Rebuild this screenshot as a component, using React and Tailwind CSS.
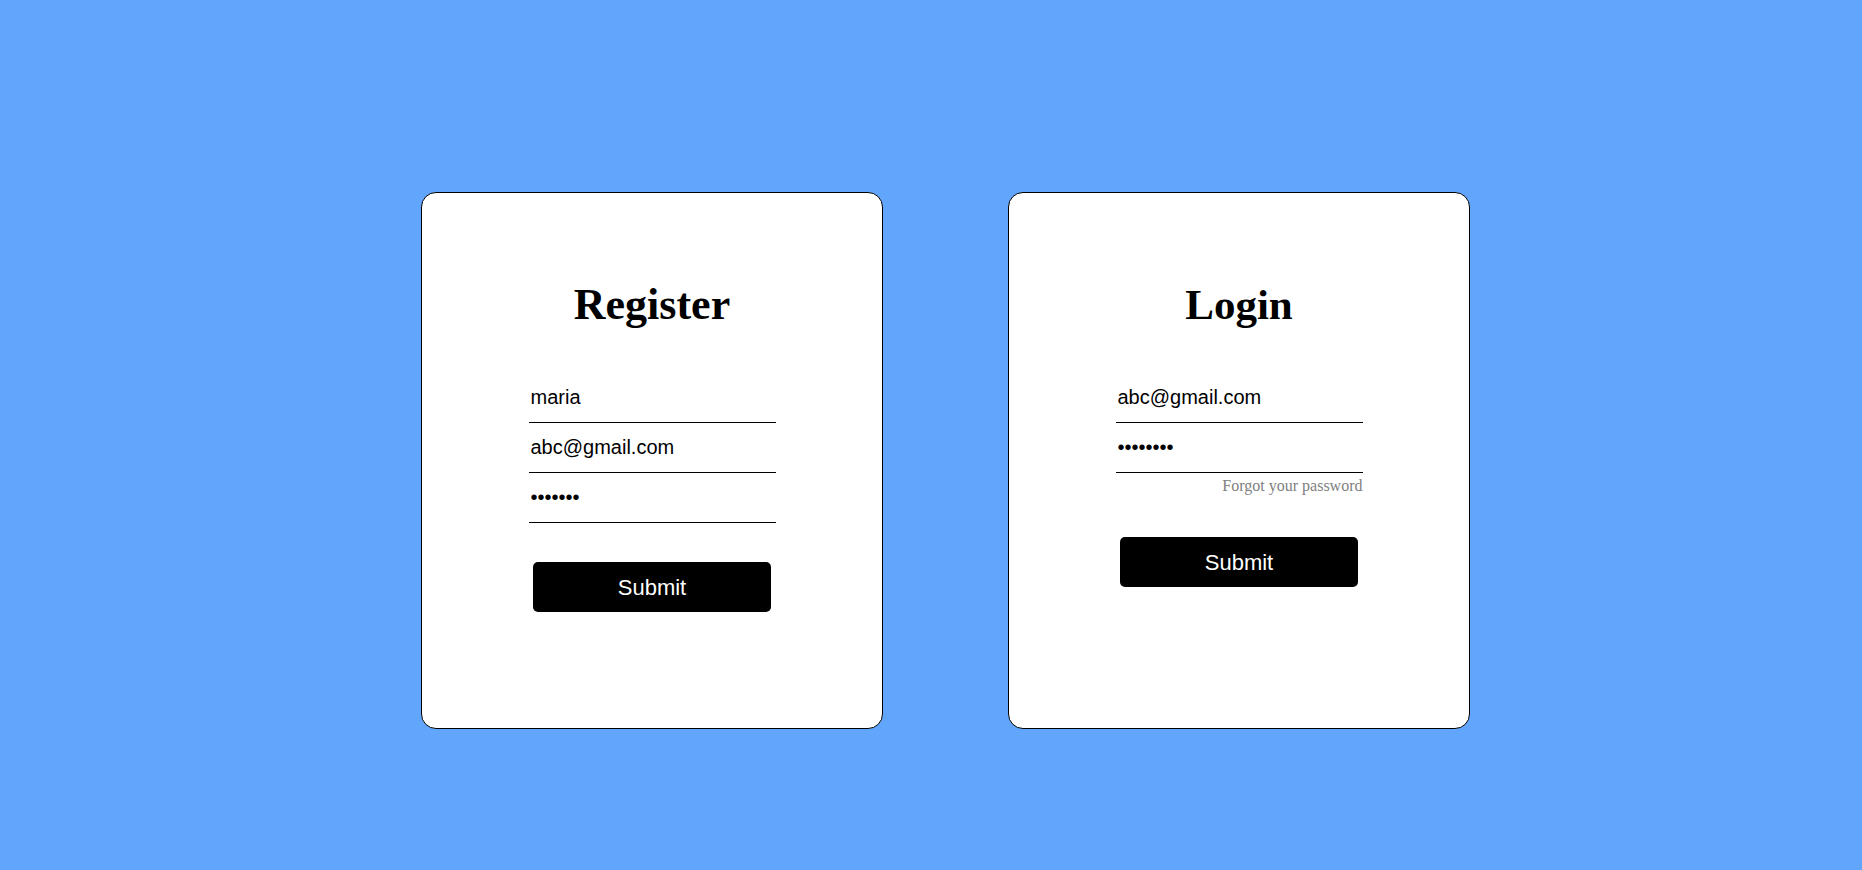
import { useState } from 'react';

function Field({ type = 'text', value, onChange }) {
  return (
    <input
      type={type}
      value={value}
      onChange={(e) => onChange(e.target.value)}
      className="block w-[247px] h-[50px] border-b border-black bg-transparent pl-[2px] text-[20px] text-black outline-none font-['Liberation_Sans',Arial,sans-serif]"
    />
  );
}

function SubmitButton({ className }) {
  return (
    <button
      type="button"
      className={`w-[238px] h-[50px] rounded-[5px] bg-black text-white text-[22px] font-['Liberation_Sans',Arial,sans-serif] ${className}`}
    >
      Submit
    </button>
  );
}

function App() {
  const [name, setName] = useState('maria');
  const [regEmail, setRegEmail] = useState('abc@gmail.com');
  const [regPass, setRegPass] = useState('1234567');
  const [loginEmail, setLoginEmail] = useState('abc@gmail.com');
  const [loginPass, setLoginPass] = useState('12345678');

  return (
    <div className="min-h-screen bg-[#61a5fd] flex items-start pl-[421px] pt-[192px] gap-[125px]">
      <div className="w-[462px] h-[537px] bg-white border border-black rounded-[15px] flex flex-col items-center pt-[88px]">
        <h1 className="text-[44px] leading-[48px] font-bold text-black font-['Liberation_Serif','Times_New_Roman',serif]">
          Register
        </h1>
        <div className="mt-[44px] flex flex-col">
          <Field value={name} onChange={setName} />
          <Field value={regEmail} onChange={setRegEmail} />
          <Field type="password" value={regPass} onChange={setRegPass} />
        </div>
        <SubmitButton className="mt-[39px]" />
      </div>

      <div className="w-[462px] h-[537px] bg-white border border-black rounded-[15px] flex flex-col items-center pt-[88px]">
        <h1 className="text-[43px] leading-[48px] font-bold text-black font-['Liberation_Serif','Times_New_Roman',serif]">
          Login
        </h1>
        <div className="mt-[44px] flex flex-col">
          <Field value={loginEmail} onChange={setLoginEmail} />
          <Field type="password" value={loginPass} onChange={setLoginPass} />
          <p className="mt-[4px] text-right text-[16px] leading-[18px] text-[#808080] font-['Liberation_Serif','Times_New_Roman',serif]">
            Forgot your password
          </p>
        </div>
        <SubmitButton className="mt-[42px]" />
      </div>
    </div>
  );
}

export default App;
